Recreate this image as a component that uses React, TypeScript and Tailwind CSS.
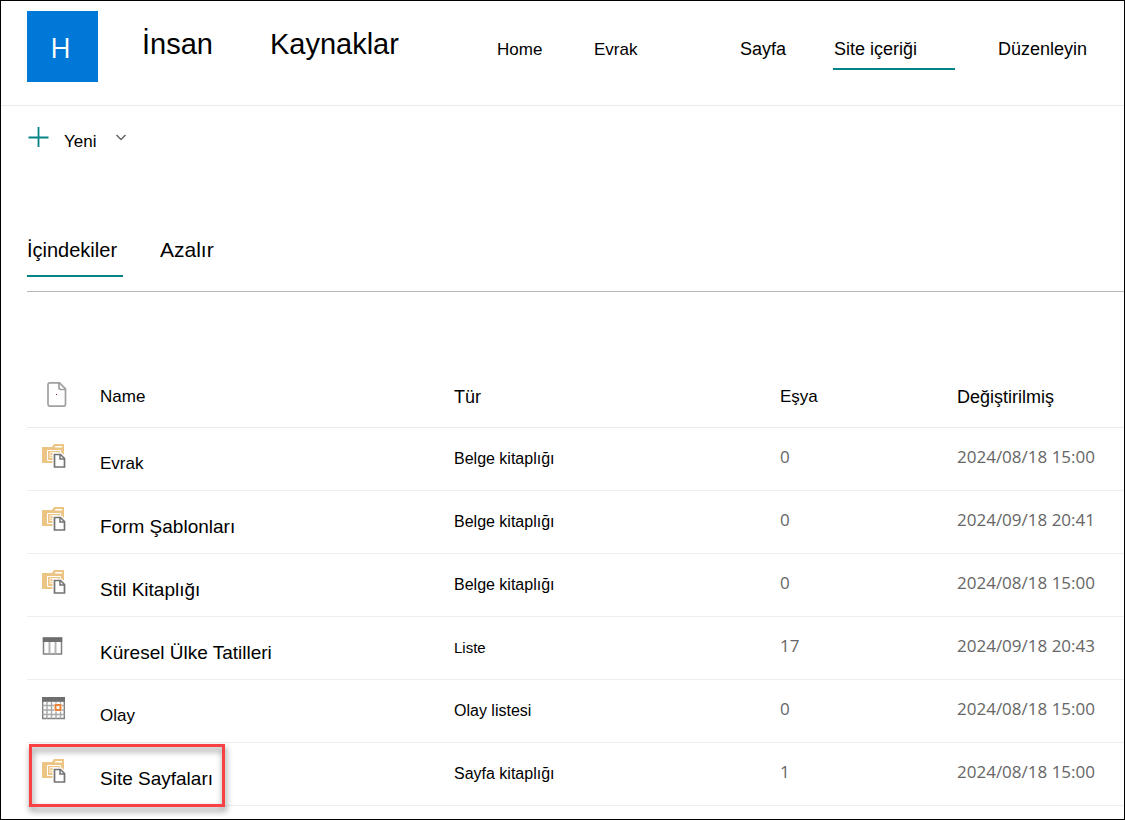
import React from 'react';

type ItemKind = 'library' | 'list' | 'events';

interface SiteItem {
  name: string;
  nameSize: string;
  kind: ItemKind;
  type: string;
  typeSize: string;
  count: number;
  modified: string;
  highlighted?: boolean;
}

const navLinks = [
  { label: 'Home', className: 'w-[97px] text-[17px]' },
  { label: 'Evrak', className: 'w-[146px] text-[17px]' },
  { label: 'Sayfa', className: 'w-[93px] text-[18px]' },
  { label: 'Site içeriği', className: 'mr-[43px] w-[122px] border-b-2 border-[#038387] pl-px text-[18px]', active: true },
  { label: 'Düzenleyin', className: 'text-[18px]' }
];

const items: SiteItem[] = [
  { name: 'Evrak', nameSize: 'text-[17px]', kind: 'library', type: 'Belge kitaplığı', typeSize: 'text-[16px]', count: 0, modified: '2024/08/18 15:00' },
  { name: 'Form Şablonları', nameSize: 'text-[19px]', kind: 'library', type: 'Belge kitaplığı', typeSize: 'text-[16px]', count: 0, modified: '2024/09/18 20:41' },
  { name: 'Stil Kitaplığı', nameSize: 'text-[19px]', kind: 'library', type: 'Belge kitaplığı', typeSize: 'text-[16px]', count: 0, modified: '2024/08/18 15:00' },
  { name: 'Küresel Ülke Tatilleri', nameSize: 'text-[19px]', kind: 'list', type: 'Liste', typeSize: 'text-[15px]', count: 17, modified: '2024/09/18 20:43' },
  { name: 'Olay', nameSize: 'text-[17px]', kind: 'events', type: 'Olay listesi', typeSize: 'text-[16px]', count: 0, modified: '2024/08/18 15:00' },
  { name: 'Site Sayfaları', nameSize: 'text-[19px]', kind: 'library', type: 'Sayfa kitaplığı', typeSize: 'text-[16px]', count: 1, modified: '2024/08/18 15:00', highlighted: true }
];

function LibraryIcon() {
  return (
    <svg width="24" height="24" viewBox="0 0 24 24" fill="none">
      <path d="M0 3h10l2-3h10v19H0z" fill="#ecc483" />
      <path d="M13.5 2h6.5v1.5h-7.5z" fill="#fff" />
      <path d="M5.500 16.500V6.500h13V10" stroke="#fff" />
      <path d="M5.500 16.500H12" stroke="#fff" />
      <path d="M8 14V8.500h8" stroke="#fbf0dc" />
      <path d="M8.500 11.500h3M8.500 13.500h3" stroke="#fbf0dc" />
      <path d="M10.500 8.500h9l4.500 4.500v11h-13.500z" fill="#fff" />
      <path d="M12.500 10.500h6l4 4v8.500h-10z" fill="#fff" stroke="#737373" strokeWidth="1.700" />
      <path d="M18 10.500v4.500h4.500" stroke="#737373" strokeWidth="1.500" />
    </svg>
  );
}

function ListIcon() {
  return (
    <svg width="24" height="24" viewBox="0 0 24 24" fill="none">
      <path d="M1.500 5h18v16h-18z" fill="#fff" stroke="#808080" strokeWidth="1.500" />
      <path d="M.8 4.500h19.400V9H.8z" fill="#6e6e6e" />
      <path d="M7.500 9v11.500M13.500 9v11.500" stroke="#b4b4b4" strokeWidth="2" />
    </svg>
  );
}

function EventsIcon() {
  return (
    <svg width="24" height="24" viewBox="0 0 24 24" fill="none">
      <path d="M.7 5h21.600v17.500H.7z" fill="#fff" stroke="#808080" strokeWidth="1.400" />
      <path d="M5 5v17.500M9.500 5v17.500M14 5v17.500M18.500 5v17.500M.5 9.500h22M.5 14h22M.5 18.500h22" stroke="#a8a8a8" strokeWidth="1.400" />
      <path d="M0 1h23v4.500H0z" fill="#6e6e6e" />
      <path d="M12 7.500h8v8h-8z" fill="#fff" />
      <path d="M13.500 9h5v5h-5z" fill="#fff" stroke="#e8833a" strokeWidth="2" />
    </svg>
  );
}

function ItemIcon({ kind }: { kind: ItemKind }) {
  if (kind === 'list') return <ListIcon />;
  if (kind === 'events') return <EventsIcon />;
  return <LibraryIcon />;
}

export default function App() {
  return (
    <div className="min-h-screen border border-black bg-white font-['Liberation_Sans',Arial,sans-serif] leading-6 text-black">
      <header className="flex h-[105px] items-start border-b border-[#eaeaea] pt-2.5 pl-[26px]">
        <div className="flex size-[71px] shrink-0 items-center justify-center bg-[#0078d7] pr-1 font-['Open_Sans',sans-serif] text-[28px] text-white">
          H
        </div>
        <h1 className="ml-[44px] flex w-[355px] shrink-0 gap-[57px] pt-[13px] text-[29px] leading-[40px]">
          <span>İnsan</span>
          <span>Kaynaklar</span>
        </h1>
        <nav className="flex items-baseline whitespace-nowrap pt-[26px]">
          {navLinks.map((link) => (
            <a
              key={link.label}
              href="#"
              aria-current={link.active ? 'page' : undefined}
              className={`block shrink-0 pb-[7px] ${link.className}`}
            >
              {link.label}
            </a>
          ))}
        </nav>
      </header>

      <div className="pt-5 pl-[26px]">
        <button type="button" className="flex h-[30px] items-start text-[17px]">
          <svg width="22" height="22" viewBox="0 0 22 22" stroke="#038387" strokeWidth="1.800">
            <path d="M11.500 1v20M1.500 11.500h20" />
          </svg>
          <span className="ml-[15px] pt-1">Yeni</span>
          <svg className="mt-[5px] ml-[19px]" width="12" height="12" viewBox="0 0 12 12" fill="none" stroke="#666" strokeWidth="1.500">
            <path d="M1.500 4L6 8.500 10.500 4" />
          </svg>
        </button>
      </div>

      <div className="ml-[26px] flex items-baseline border-b border-[#b8b8b8] pt-[82px] pb-3.5" role="tablist">
        <button type="button" role="tab" aria-selected="true" className="w-[96px] border-b-2 border-[#038387] pb-[13px] text-left text-[20px]">
          İçindekiler
        </button>
        <button type="button" role="tab" aria-selected="false" className="ml-[37px] text-[21px]">
          Azalır
        </button>
      </div>

      <div className="mt-[72px] ml-[26px]">
        <table className="w-full table-fixed border-separate border-spacing-0 text-left">
          <colgroup>
            <col className="w-[73px]" />
            <col className="w-[354px]" />
            <col className="w-[326px]" />
            <col className="w-[177px]" />
            <col />
          </colgroup>
          <thead>
            <tr className="h-[64px] align-top text-[17px] [&>th]:border-b [&>th]:border-[#eaeaea] [&>th]:pt-[21px] [&>th]:font-normal">
              <th scope="col" aria-label="Simge">
                <svg className="-mt-[3px] ml-5" width="20" height="25" viewBox="0 0 20 25" fill="none" stroke="#a0a0a0" strokeWidth="1.700">
                  <path d="M3 .8h9.500l6 6v15.400a2 2 0 0 1-2 2H3a2 2 0 0 1-2-2V2.800a2 2 0 0 1 2-2z" />
                  <path d="M12 1v4.500a2 2 0 0 0 2 2h4.500" />
                  <path d="M9 12.500h1" stroke="#8b1a1a" strokeWidth="1" />
                </svg>
              </th>
              <th scope="col">Name</th>
              <th scope="col" className="text-[18px]">Tür</th>
              <th scope="col">Eşya</th>
              <th scope="col" className="text-[18px]">Değiştirilmiş</th>
            </tr>
          </thead>
          <tbody>
            {items.map((item) => (
              <tr key={item.name} className="h-[63px] align-top [&>td]:border-b [&>td]:border-[#eeeeee]">
                <td className="relative pt-4 pl-[15px]">
                  <ItemIcon kind={item.kind} />
                  {item.highlighted && (
                    <span className="pointer-events-none absolute top-px left-[2px] h-[63px] w-[196px] border-3 border-[#f94144] drop-shadow-[1px_4px_3px_rgba(0,0,0,0.5)]" />
                  )}
                </td>
                <td className={`pt-6 ${item.nameSize}`}>
                  <a href="#">{item.name}</a>
                </td>
                <td className={`pt-[19px] ${item.typeSize}`}>{item.type}</td>
                <td className="pt-[17px] font-['Open_Sans',sans-serif] text-[17px] text-[#666]">{item.count}</td>
                <td className="pt-[17px] font-['Open_Sans',sans-serif] text-[17px] text-[#666]">{item.modified}</td>
              </tr>
            ))}
          </tbody>
        </table>
      </div>
    </div>
  );
}
